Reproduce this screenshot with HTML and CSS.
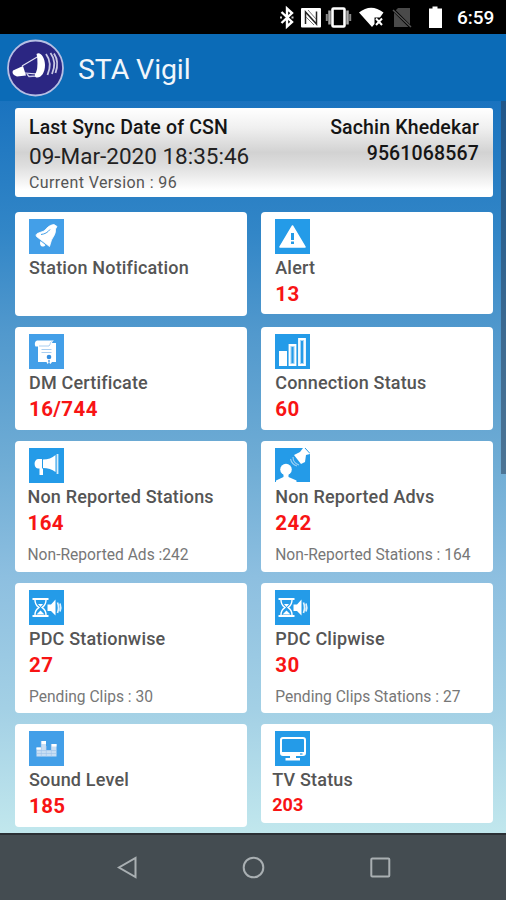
FILE: index.html
```html
<!DOCTYPE html>
<html lang="en">
<head>
  <meta charset="UTF-8" />
  <meta name="viewport" content="width=device-width, initial-scale=1.0" />
  <title>STA Vigil</title>
  <link rel="stylesheet" href="styles.css">
</head>
<body>
  <div class="statusbar">
    <svg class="status-icons" width="170" height="34" viewBox="0 0 170 34">
      <!-- bluetooth -->
      <path d="M2.500 12 L13 22 L8 26.500 V8.500 L13 13 L2.500 23" fill="none" stroke="#fff" stroke-width="2.400"/>
      <path d="M1 17.500h2M12.500 17.500h2" stroke="#ccc" stroke-width="2"/>
      <!-- nfc -->
      <rect x="22" y="8" width="20" height="19.500" rx="1" fill="#fff"/>
      <path d="M26.500 24V12l11 12V11.500" fill="none" stroke="#222" stroke-width="1.500"/>
      <path d="M29 10l8 9M27 17l8 8" stroke="#777" stroke-width="1"/>
      <!-- vibrate -->
      <rect x="53.500" y="8.500" width="12" height="18" rx="1" fill="#000" stroke="#fff" stroke-width="2.600"/>
      <path d="M50.500 10.500v14M68.500 10.500v14" stroke="#aaa" stroke-width="2.500"/>
      <path d="M47.800 14v7M71.200 14v7" stroke="#888" stroke-width="2"/>
      <!-- wifi -->
      <path d="M80 12.500 Q92 3 104.500 12.500 L101 17.500 H95.500 V24 L93 27Z" fill="#fff"/>
      <path d="M97 18.500l6 6.500M103 18.500l-6 6.500" stroke="#fff" stroke-width="2"/>
      <!-- no sim -->
      <path d="M119 8h12v19h-16V12z" fill="#4a4a4a"/>
      <path d="M113.500 9l18 18" stroke="#000" stroke-width="3"/>
      <path d="M114 10l18 17" stroke="#555" stroke-width="1.500"/>
      <!-- battery -->
      <path d="M153.500 6.500h5v2h4.500V28H150V8.500h3.500z" fill="#fff"/>
    </svg>
    <span class="clock">6:59</span>
  </div>

  <header class="appbar">
    <svg class="logo" width="58" height="58" viewBox="0 0 58 58">
      <circle cx="28.500" cy="29" r="27.500" fill="#2b2682" stroke="#b6bfe4" stroke-width="1.800"/>
      <path d="M6 31.500l10-4.500 3 9.500-9 1c-3-1-5.500-3-4-6z" fill="#fff"/>
      <path d="M15 27l16-9.500v17.500l-13-1" fill="none" stroke="#e0e0f2" stroke-width="1.200"/>
      <path d="M20 35l2 2.500 7-.5v-2" fill="none" stroke="#c9c9e6" stroke-width="1.400"/>
      <path d="M29.500 15c3.500-3 8.500 3 8.500 11 0 8-4 13-8.500 12.500-2-.5-2-3.500-.5-5 2.500-6 2.500-12 .5-18.500z" fill="#fff"/>
      <path d="M39 15c4.500 6 4.500 14 1.500 21M43.500 14c4.500 6 4.500 14 1.500 21M47 14.500c4 6 4 12.500 1.500 19.500" fill="none" stroke="#c9c8e4" stroke-width="1.800"/>
    </svg>
    <h1>STA Vigil</h1>
  </header>

  <main class="content">
    <section class="summary">
      <div class="sync">
        <p class="sync-title">Last Sync Date of CSN</p>
        <p class="sync-date">09-Mar-2020 18:35:46</p>
        <p class="version">Current Version : 96</p>
      </div>
      <div class="user">
        <p class="user-name">Sachin Khedekar</p>
        <p class="user-phone">9561068567</p>
      </div>
    </section>

    <div class="cards">
      <div class="card">
        <svg class="icon soft" viewBox="0 0 35 35">
          <path d="M25 5.500l3 2-1.500 2.500c.5 5-2.500 8-4 11l-2 6.500L7.500 17.500c-1-1.500 0-3 2-3.500l5.500-2c3-3 5-6 10-6.500z" fill="#fff" stroke="#fff" stroke-width=".8" stroke-linejoin="round"/>
          <path d="M11.500 22l5 4c-2 3-7 1.500-5-4z" fill="#fff"/>
          <path d="M12 15.500c4-.5 6.500-2 9-5" fill="none" stroke="#439fe8" stroke-width="1"/>
        </svg>
        <h2>Station Notification</h2>
      </div>
      <div class="card alert">
        <svg class="icon" viewBox="0 0 35 35">
          <path d="M17.500 7L30 28H5z" fill="#fff" stroke="#fff" stroke-width="1.500" stroke-linejoin="round"/>
          <path d="M17.500 14v7M17.500 22.500v2.500" stroke="#249be8" stroke-width="3"/>
        </svg>
        <h2>Alert</h2>
        <p class="count">13</p>
      </div>

      <div class="card">
        <svg class="icon soft" viewBox="0 0 35 35">
          <path d="M8 6.500h17c-2 1-2 2.500-2 2.500h4v19h-4l-1.500 2-1.500-1.500-1.500 1.500-1-2H9V12.500H6.500c-1-2-1-5 1.500-6z" fill="#fff"/>
          <path d="M10 12h10c1.500-1.500 1-3.500 2.500-4.500M12.500 15.500h10M12.500 18.500h10" fill="none" stroke="#a9cef1" stroke-width="1"/>
          <circle cx="20" cy="23" r="2.300" fill="#358ee0"/>
          <path d="M19 26v3l1-1 1 1v-3" fill="#7db6ec"/>
        </svg>
        <h2>DM Certificate</h2>
        <p class="count">16/744</p>
      </div>
      <div class="card">
        <svg class="icon" viewBox="0 0 35 35">
          <path d="M4 17h8v15H4z" fill="#fff"/>
          <path d="M14.500 11h6v20h-6zM24 5h6v26h-6z" fill="#a5d5f6" stroke="#fff" stroke-width="1.800"/>
          <path d="M17.500 13v16M27 7v22" stroke="#249be8" stroke-width="2"/>
        </svg>
        <h2>Connection Status</h2>
        <p class="count">60</p>
      </div>

      <div class="card tall shifted">
        <svg class="icon" viewBox="0 0 35 35">
          <path d="M9 11h4v9.500h1V27h-3.500v-6.500H9C4.500 20 4.500 11.500 9 11z" fill="#fff"/>
          <path d="M14 11.500c5 0 9-1.500 12.500-4.500v17c-3.500-2.500-7.500-4-12.500-4z" fill="#fff"/>
          <path d="M28.500 6v20" stroke="#d8edfb" stroke-width="1.800"/>
        </svg>
        <h2>Non Reported Stations</h2>
        <p class="count">164</p>
        <p class="detail">Non-Reported Ads :242</p>
      </div>
      <div class="card tall">
        <svg class="icon" viewBox="0 0 35 35">
          <circle cx="11" cy="21.500" r="5.800" fill="#fff"/>
          <path d="M8.500 25h5v4l8 3.500V35H1v-2.500L8.500 29zM0 35v-1h35v1z" fill="#fff"/>
          <path d="M19 7l6-3 3-4h7v6l-4 1-1 7-4 2z" fill="#fff"/>
          <path d="M18 9c0 4 3 7 6 8M15.500 11c1 4 3 6 6.500 7" fill="none" stroke="#9bd0f5" stroke-width="1.100"/>
          <path d="M30 0l5 5.500" stroke="#249be8" stroke-width="1"/>
        </svg>
        <h2>Non Reported Advs</h2>
        <p class="count">242</p>
        <p class="detail">Non-Reported Stations : 164</p>
      </div>

      <div class="card tall">
        <svg class="icon" viewBox="0 0 35 35">
          <path d="M3.500 9h16M3.500 26h16" stroke="#fff" stroke-width="2.200"/>
          <path d="M6 10c0 5 2 6 4 7.500C8 19 6 20 6 25M17 10c0 5-2 6-4 7.500 2 1.500 4 2.500 4 7.500" fill="none" stroke="#fff" stroke-width="1.400"/>
          <path d="M9 14h5l-2.500 3zM7.500 24.500l4-4 4 4z" fill="#fff"/>
          <path d="M18.500 14.500h3.500l4.500-5v16L22 21h-3.500z" fill="#fff"/>
          <path d="M28.500 12.500q2 5 0 10.500M31 13.500q1.500 4 0 8" fill="none" stroke="#e1f2fd" stroke-width="1.700"/>
        </svg>
        <h2>PDC Stationwise</h2>
        <p class="count">27</p>
        <p class="detail">Pending Clips : 30</p>
      </div>
      <div class="card tall">
        <svg class="icon" viewBox="0 0 35 35">
          <path d="M3.500 9h16M3.500 26h16" stroke="#fff" stroke-width="2.200"/>
          <path d="M6 10c0 5 2 6 4 7.500C8 19 6 20 6 25M17 10c0 5-2 6-4 7.500 2 1.500 4 2.500 4 7.500" fill="none" stroke="#fff" stroke-width="1.400"/>
          <path d="M9 14h5l-2.500 3zM7.500 24.500l4-4 4 4z" fill="#fff"/>
          <path d="M18.500 14.500h3.500l4.500-5v16L22 21h-3.500z" fill="#fff"/>
          <path d="M28.500 12.500q2 5 0 10.500M31 13.500q1.500 4 0 8" fill="none" stroke="#e1f2fd" stroke-width="1.700"/>
        </svg>
        <h2>PDC Clipwise</h2>
        <p class="count">30</p>
        <p class="detail">Pending Clips Stations : 27</p>
      </div>

      <div class="card">
        <svg class="icon soft" viewBox="0 0 35 35">
          <path d="M7.500 16.500H12V10h5v9h5v-6h5.500v12.500h-20z" fill="#c9def3"/>
          <path d="M12 10h5v3h-5zM22.500 13h5v2.500h-5zM7.500 16.500H12v2H7.500z" fill="#fff"/>
          <path d="M12.300 10v15.500M17.300 15v10.500M22.300 13v12.500M7.500 19.500h20M7.500 22.500h20" stroke="#9fc3ea" stroke-width=".6"/>
        </svg>
        <h2>Sound Level</h2>
        <p class="count">185</p>
      </div>
      <div class="card tv">
        <svg class="icon" viewBox="0 0 35 35">
          <rect x="6" y="7" width="24" height="17" rx="2" fill="#249be8" stroke="#fff" stroke-width="2"/>
          <path d="M6 22.500h24" stroke="#fff" stroke-width="3"/>
          <path d="M15 25h6v2h4v2.500H10.500V27H15z" fill="#fff"/>
          <path d="M25 23h2.500" stroke="#249be8" stroke-width="1.200"/>
        </svg>
        <h2>TV Status</h2>
        <p class="count">203</p>
      </div>
    </div>
    <div class="scrollbar"></div>
  </main>

  <nav class="navbar">
    <svg width="24" height="24" viewBox="0 0 24 24"><path d="M20.500 2v19L4 11.500z"/></svg>
    <svg width="24" height="24" viewBox="0 0 24 24"><circle cx="12.500" cy="11.500" r="9.800"/></svg>
    <svg width="24" height="24" viewBox="0 0 24 24"><rect x="3.300" y="2.500" width="18" height="18" rx="1"/></svg>
  </nav>
</body>
</html>
```
FILE: styles.css
```css
* {
  box-sizing: border-box;
}

body {
  margin: 0;
  height: 900px;
  display: flex;
  flex-direction: column;
  overflow: hidden;
  font-family: Roboto, "Liberation Sans", sans-serif;
  background: #000;
}

h1, h2, p {
  margin: 0;
}

.statusbar {
  height: 34px;
  display: flex;
  justify-content: flex-end;
  align-items: center;
  padding-right: 11px;
  background: #000;
  color: #fff;
}

.status-icons {
  margin-right: 8px;
}

.clock {
  width: 38px;
  padding-top: 1px;
  font-size: 19px;
  font-weight: 500;
  line-height: 34px;
  white-space: nowrap;
}

.appbar {
  height: 67px;
  display: flex;
  align-items: center;
  gap: 13px;
  padding: 0 0 0 7px;
  background: #0b6bb7;
  color: #f1f6fb;
}

.appbar h1 {
  font-size: 28.5px;
  font-weight: 400;
  letter-spacing: -0.1px;
  padding-top: 3px;
}

.content {
  position: relative;
  height: 732px;
  padding: 7px 13px 0 14.5px;
  background: linear-gradient(#1a73bf 0%, #3286c7 18%, #5299cd 32%, #70add5 50%, #8dbfe0 65%, #a3d0e5 83%, #c1e7ed 100%);
}

.summary {
  display: flex;
  justify-content: space-between;
  height: 89px;
  padding: 8px 14px 0 14.5px;
  border-radius: 3px;
  background: linear-gradient(#fff 0%, #f0f0f0 22%, #d2d2d2 50%, #dedede 65%, #fff 92%);
  color: #151515;
}

.sync-title, .user-name, .user-phone {
  font-size: 19.5px;
  font-weight: 500;
  line-height: 23px;
  letter-spacing: 0.15px;
}

.user {
  text-align: right;
}

.user-phone {
  padding-top: 3px;
}

.sync-date {
  font-size: 22.5px;
  line-height: 34px;
  color: #222;
}

.version {
  font-size: 16px;
  line-height: 20px;
  letter-spacing: 0.4px;
  color: #555;
}

.cards {
  display: grid;
  grid-template-columns: 1fr 1fr;
  grid-template-rows: 104px 103px 131px 130px 103px;
  gap: 11px 14px;
  margin-top: 14.5px;
}

.card {
  display: flex;
  flex-direction: column;
  align-items: flex-start;
  padding: 7px 14px 0;
  border-radius: 4px;
  background: #fff;
}

.alert {
  height: 102.5px;
}

.icon {
  width: 35px;
  height: 35px;
  background: #249be8;
}

.icon.soft {
  background: #439fe8;
}

.card h2 {
  margin-top: 2px;
  padding-left: 0.5px;
  font-size: 18px;
  font-weight: 500;
  line-height: 24px;
  letter-spacing: 0.18px;
  color: #555;
  white-space: nowrap;
}

.count {
  padding-left: 0.5px;
  font-size: 20.5px;
  font-weight: 700;
  line-height: 29px;
  letter-spacing: 0.4px;
  color: #f81414;
}

.detail {
  margin-top: 7px;
  padding-left: 0.5px;
  font-size: 15.6px;
  line-height: 20px;
  color: #777;
  white-space: nowrap;
}

.shifted h2, .shifted .count, .shifted .detail {
  padding-left: 0;
  margin-left: -1px;
}

.tv {
  height: 99px;
}

.tv h2, .tv .count {
  margin-left: -3px;
}

.tv .count {
  font-size: 18px;
  line-height: 26px;
  letter-spacing: 0;
}

.scrollbar {
  position: absolute;
  top: 0;
  right: 0;
  width: 5px;
  height: 373px;
  background: rgba(40, 60, 85, 0.5);
}

.navbar {
  height: 67px;
  display: flex;
  justify-content: center;
  align-items: center;
  gap: 102.5px;
  background: #444c51;
  border-top: 2px solid #2b3035;
}

.navbar svg {
  fill: none;
  stroke: #a9afb2;
  stroke-width: 2;
}
```
